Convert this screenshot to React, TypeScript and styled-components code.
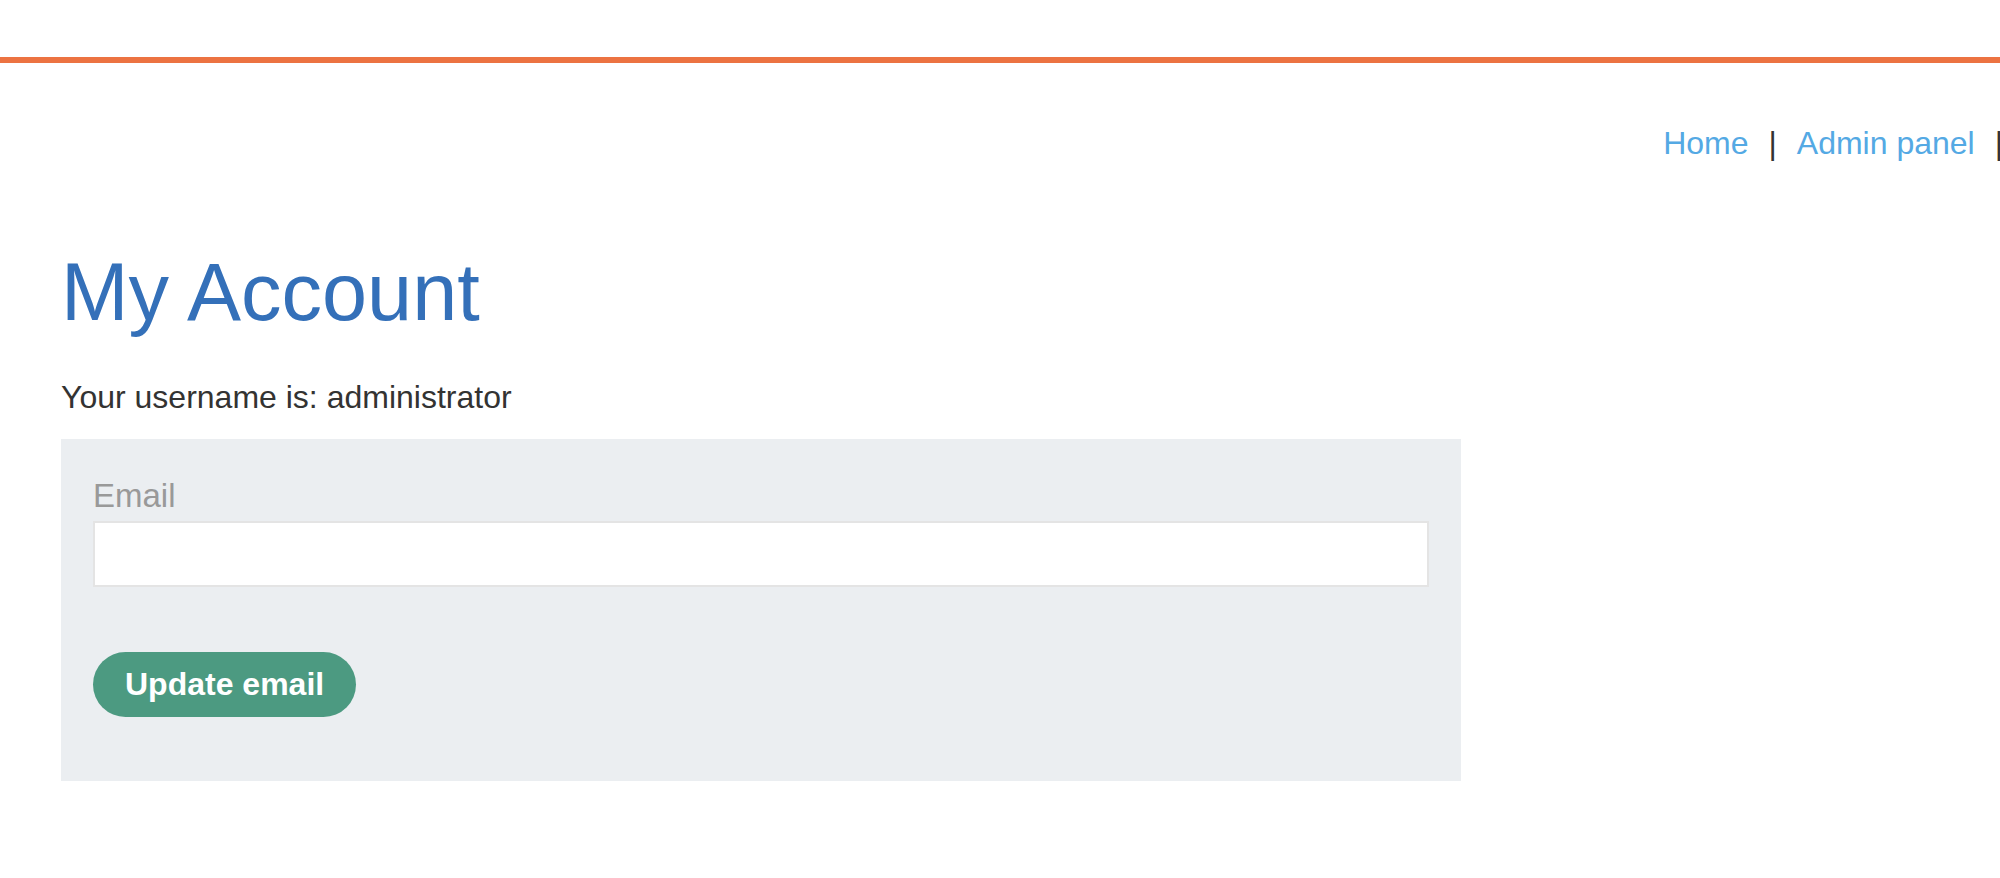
import { createGlobalStyle, styled } from "styled-components";

const GlobalStyle = createGlobalStyle`
  html, body {
    margin: 0;
    padding: 0;
    background: #ffffff;
    overflow: hidden;
  }
  body {
    font-family: "Liberation Sans", Arial, Helvetica, sans-serif;
    color: #333332;
  }
`;

const Page = styled.div`
  width: 2000px;
  min-height: 878px;
`;

const Header = styled.header`
  height: 57px;
  border-bottom: 6px solid #ec7341;
`;

const TopLinks = styled.nav`
  display: flex;
  justify-content: flex-end;
  align-items: center;
  gap: 20px;
  margin-top: 62px;
  margin-right: -3px;
  font-size: 32px;
  line-height: 37px;
  white-space: nowrap;
`;

const TopLink = styled.a`
  color: #54a9e4;
  text-decoration: none;
  cursor: pointer;
`;

const Separator = styled.span`
  color: #333332;
`;

const Main = styled.main`
  padding-left: 61px;
`;

const Title = styled.h1`
  margin: 84px 0 0;
  font-size: 81px;
  font-weight: normal;
  line-height: 92px;
  color: #3470b9;
`;

const Username = styled.p`
  margin: 41px 0 0;
  font-size: 32px;
  line-height: 37px;
  color: #333332;
`;

const FormBox = styled.form`
  display: flex;
  flex-direction: column;
  align-items: flex-start;
  box-sizing: border-box;
  width: 1400px;
  margin-top: 23px;
  padding: 38px 32px 64px;
  background: #ebeef1;
`;

const Label = styled.label`
  font-size: 33px;
  line-height: 38px;
  color: #999999;
`;

const EmailInput = styled.input`
  box-sizing: border-box;
  width: 100%;
  height: 66px;
  margin-top: 6px;
  padding: 0 16px;
  border: 2px solid #e4e4e4;
  border-radius: 0;
  background: #ffffff;
  font-family: inherit;
  font-size: 32px;
  outline: none;
`;

const SubmitButton = styled.button`
  height: 65px;
  margin-top: 65px;
  padding: 0 32px;
  border: none;
  border-radius: 33px;
  background: #4c9a81;
  color: #ffffff;
  font-family: inherit;
  font-size: 32px;
  font-weight: bold;
  cursor: pointer;
`;

export default function App() {
  return (
    <Page>
      <GlobalStyle />
      <Header />
      <TopLinks>
        <TopLink>Home</TopLink>
        <Separator>|</Separator>
        <TopLink>Admin panel</TopLink>
        <Separator>|</Separator>
      </TopLinks>
      <Main>
        <Title>My Account</Title>
        <Username>Your username is: administrator</Username>
        <FormBox onSubmit={(e) => e.preventDefault()}>
          <Label htmlFor="email">Email</Label>
          <EmailInput id="email" type="email" name="email" />
          <SubmitButton type="submit">Update email</SubmitButton>
        </FormBox>
      </Main>
    </Page>
  );
}
